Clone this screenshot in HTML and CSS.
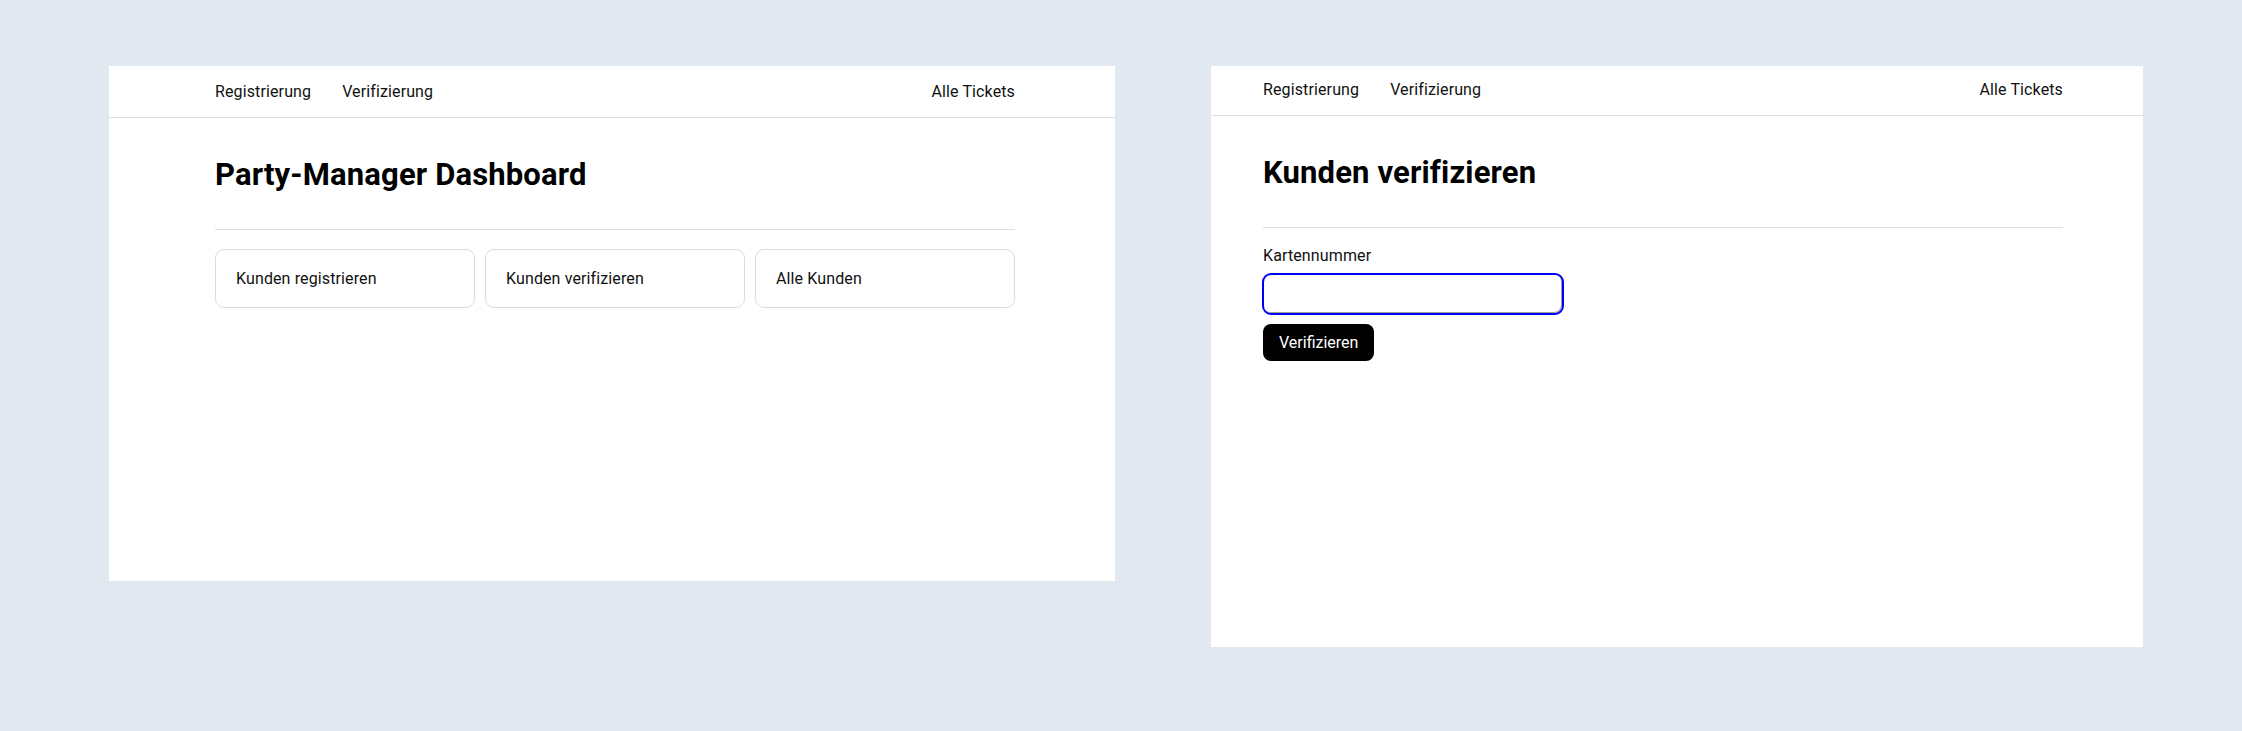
FILE: index.html
```html
<!DOCTYPE html>
<html lang="de">
<head>
<meta charset="utf-8">
<title>Party-Manager</title>
<link rel="stylesheet" href="styles.css">
</head>
<body>
<div class="stage">
  <section class="panel panel-dash">
    <nav class="topnav topnav-dash">
      <div class="nav-left">
        <a class="nav-link" href="#">Registrierung</a>
        <a class="nav-link" href="#">Verifizierung</a>
      </div>
      <a class="nav-link" href="#">Alle Tickets</a>
    </nav>
    <main class="content content-dash">
      <h1 class="title">Party-Manager Dashboard</h1>
      <hr class="rule">
      <div class="cards">
        <a class="card" href="#">Kunden registrieren</a>
        <a class="card" href="#">Kunden verifizieren</a>
        <a class="card" href="#">Alle Kunden</a>
      </div>
    </main>
  </section>

  <section class="panel panel-verify">
    <nav class="topnav topnav-verify">
      <div class="nav-left">
        <a class="nav-link" href="#">Registrierung</a>
        <a class="nav-link" href="#">Verifizierung</a>
      </div>
      <a class="nav-link" href="#">Alle Tickets</a>
    </nav>
    <main class="content content-verify">
      <h1 class="title">Kunden verifizieren</h1>
      <hr class="rule">
      <form class="form">
        <label class="label" for="card">Kartennummer</label>
        <input class="field" id="card" type="text">
        <button class="btn" type="button">Verifizieren</button>
      </form>
    </main>
  </section>
</div>
</body>
</html>
```

FILE: styles.css
```css
* { box-sizing: border-box; }

html, body {
  margin: 0;
  padding: 0;
  background: #e2e8f0;
}

body {
  font-family: Roboto, "Liberation Sans", Arial, sans-serif;
  font-size: 16px;
  line-height: 24px;
  letter-spacing: 0.12px;
  color: #111;
}

.stage {
  display: flex;
  align-items: flex-start;
  gap: 96px;
  padding: 66px 0 0 109px;
}

.panel {
  background: #fff;
  display: flex;
  flex-direction: column;
}

.panel-dash { width: 1006px; height: 515px; }
.panel-verify { width: 932px; height: 581px; }

.topnav {
  display: flex;
  justify-content: space-between;
  border-bottom: 1px solid #dedede;
}

.topnav-dash { padding: 14px 100px 13px 106px; }
.topnav-verify { padding: 12px 80px 13px 52px; }

.nav-left {
  display: flex;
  gap: 31px;
}

.nav-link {
  color: #111;
  text-decoration: none;
}

.content-dash { padding: 0 100px 0 106px; }
.content-verify { padding: 0 80px 0 52px; }

.title {
  margin: 39px 0 0;
  font-size: 31px;
  line-height: 36px;
  font-weight: 700;
  letter-spacing: 0.15px;
  color: #000;
}

.rule {
  margin: 36px 0 0;
  border: 0;
  border-top: 1px solid #dedede;
  height: 0;
}

.cards {
  display: grid;
  grid-template-columns: repeat(3, 1fr);
  gap: 10px;
  margin-top: 19px;
}

.card {
  display: block;
  padding: 17px 20px 16px;
  border: 1px solid #dcdcdc;
  border-radius: 9px;
  color: #111;
  text-decoration: none;
}

.form {
  display: flex;
  flex-direction: column;
  align-items: flex-start;
  margin-top: 16px;
}

.label {
  display: block;
  color: #111;
}

.field {
  margin: 5px 0 0 -1px;
  width: 302px;
  height: 42px;
  border: 2px solid #0000f5;
  border-radius: 9px;
  background: #fff;
  box-shadow: inset -1px -1px 0 #a0a0a0;
  outline: none;
  font: inherit;
  padding: 0 10px;
}

.btn {
  margin-top: 9px;
  padding: 7px 16px 6px;
  background: #000;
  color: #fff;
  border: 0;
  border-radius: 8px;
  font: inherit;
  line-height: 24px;
  cursor: pointer;
}
```
